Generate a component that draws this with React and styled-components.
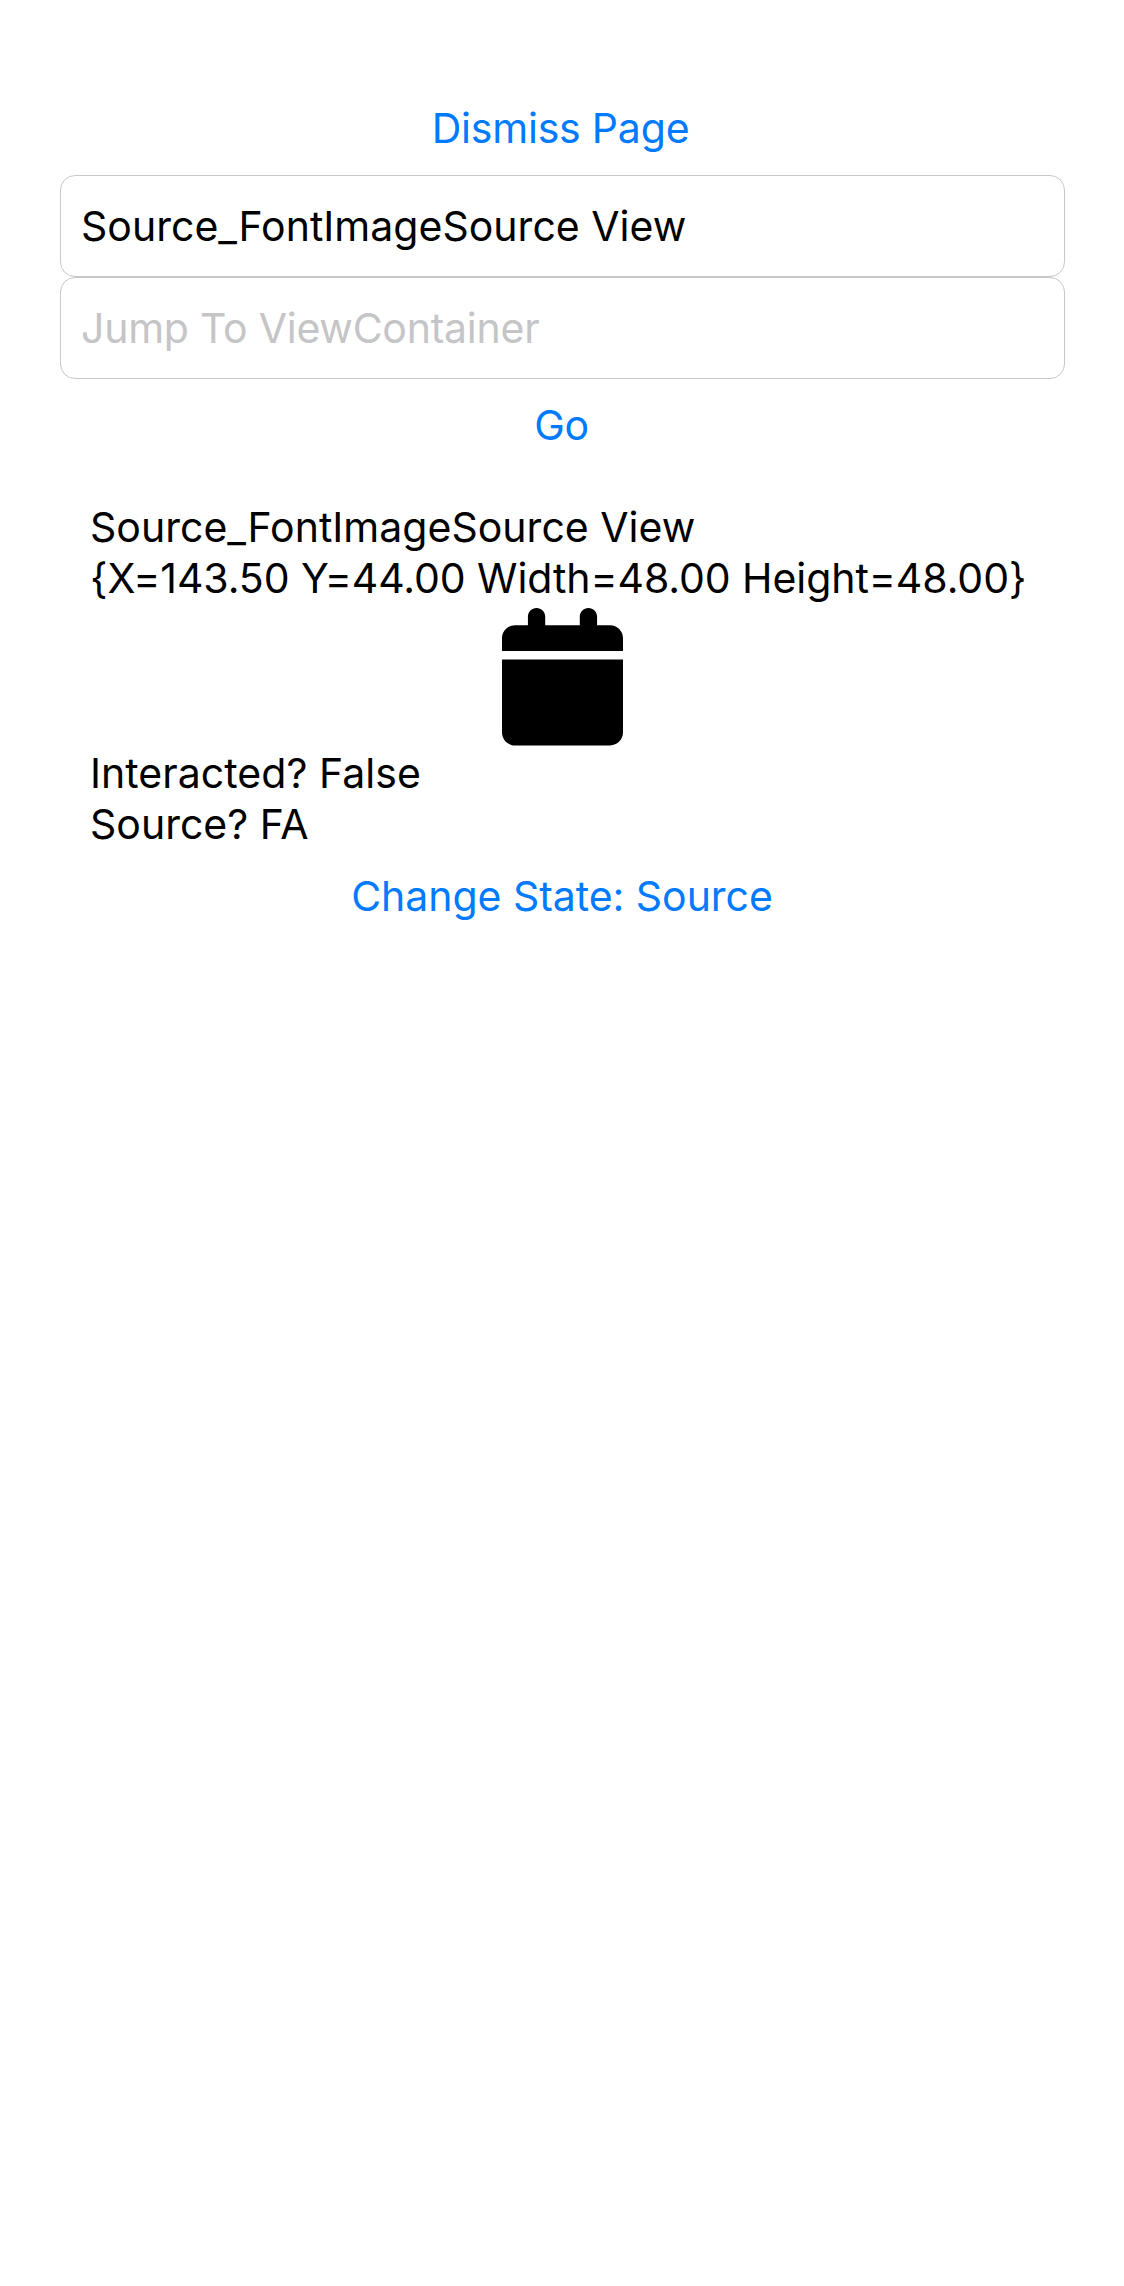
import React, { useState } from "react";
import styled, { createGlobalStyle } from "styled-components";

const GlobalStyle = createGlobalStyle`
  *, *::before, *::after { box-sizing: border-box; }
  html, body { margin: 0; background: #ffffff; }
`;

const Page = styled.main`
  display: flex;
  flex-direction: column;
  min-height: 2286px;
  padding: 83px 59px 0 60px;
  background: #ffffff;
  color: #000000;
  font-family: Inter, "Liberation Sans", sans-serif;
  font-size: 41px;
  line-height: 50px;
`;

const LinkButton = styled.button`
  display: block;
  width: 100%;
  height: 92px;
  margin: 0;
  padding: ${(p) => p.$top || 20}px ${(p) => p.$inset || 0}px 0 0;
  border: 0;
  background: transparent;
  color: #007aff;
  font: inherit;
  letter-spacing: ${(p) => p.$tracking || 0}px;
  text-align: center;
  white-space: nowrap;
  cursor: pointer;
  display: flex;
  justify-content: center;
  align-items: flex-start;
`;

const Field = styled.input`
  display: block;
  width: 100%;
  height: 102px;
  margin: 0;
  padding: 25px 20px;
  border: 1px solid #c8c8c8;
  border-radius: 15px;
  outline: none;
  background: #ffffff;
  color: #000000;
  font: inherit;
  letter-spacing: 0.02px;

  &::placeholder {
    color: #c5c5c7;
    opacity: 1;
    letter-spacing: -0.24px;
  }
`;

const Container = styled.section`
  display: flex;
  flex-direction: column;
  padding: 31px 30px 1px;
`;

const Label = styled.div`
  height: 51px;
  letter-spacing: ${(p) => p.$tracking || 0}px;
  white-space: nowrap;
`;

const ImageBox = styled.div`
  display: flex;
  justify-content: center;
  height: 144px;
  padding-top: 4px;
`;

const CalendarSvg = styled.svg`
  display: block;
  width: 121px;
  height: 137.5px;
  fill: #000000;
`;

function CalendarIcon() {
  return (
    <CalendarSvg viewBox="0 0 448 512" preserveAspectRatio="none" aria-hidden="true">
      <path d="M96 32V64H48C21.500 64 0 85.500 0 112v48H448V112c0-26.500-21.500-48-48-48H352V32c0-17.700-14.300-32-32-32s-32 14.300-32 32V64H160V32c0-17.700-14.300-32-32-32S96 14.300 96 32zM448 192H0V464c0 26.500 21.500 48 48 48H400c26.500 0 48-21.500 48-48V192z" />
    </CalendarSvg>
  );
}

export default function App() {
  const [view, setView] = useState("Source_FontImageSource View");

  return (
    <>
      <GlobalStyle />
      <Page>
        <LinkButton $tracking={-0.2} $inset={4}>Dismiss Page</LinkButton>
        <Field value={view} onChange={(e) => setView(e.target.value)} />
        <Field placeholder="Jump To ViewContainer" />
        <LinkButton $tracking={-0.4} $inset={2} $top={21}>Go</LinkButton>
        <Container>
          <Label $tracking={0.02}>Source_FontImageSource View</Label>
          <Label $tracking={-0.065}>{"{X=143.50 Y=44.00 Width=48.00 Height=48.00}"}</Label>
          <ImageBox>
            <CalendarIcon />
          </ImageBox>
          <Label $tracking={0.04}>Interacted? False</Label>
          <Label>Source? FA</Label>
        </Container>
        <LinkButton $tracking={-0.04} $inset={1}>Change State: Source</LinkButton>
      </Page>
    </>
  );
}
